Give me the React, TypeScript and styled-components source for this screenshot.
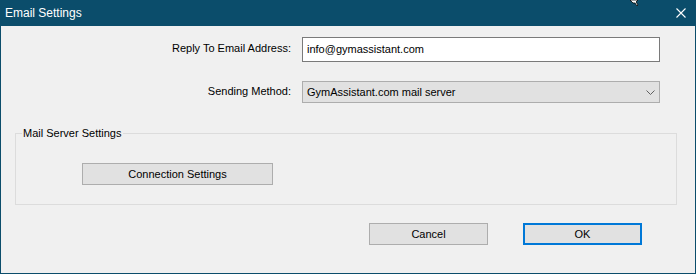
import React from "react";
import styled, { createGlobalStyle } from "styled-components";

const GlobalStyle = createGlobalStyle`
  html, body {
    margin: 0;
    padding: 0;
    background: #f0f0f0;
  }
  body {
    font-family: "Liberation Sans", Arial, sans-serif;
    font-size: 11px;
    color: #000;
  }
`;

const accent = "#0b4d6b";

const Window = styled.div`
  width: 696px;
  height: 274px;
  box-sizing: border-box;
  display: flex;
  flex-direction: column;
  background: #f0f0f0;
  border: 1px solid ${accent};
  border-top: none;
  overflow: hidden;
`;

const TitleBar = styled.div`
  height: 26px;
  flex: none;
  display: flex;
  align-items: center;
  justify-content: space-between;
  background: ${accent};
  color: #fff;
  padding: 0 9px 0 4px;
  font-size: 12px;
  position: relative;
`;

const CloseIcon = styled.svg`
  width: 10px;
  height: 10px;
  display: block;
`;

const Cursor = styled.svg`
  position: absolute;
  left: 628px;
  top: 0;
`;

const Body = styled.div`
  flex: 1;
  display: flex;
  flex-direction: column;
`;

const FormGrid = styled.div`
  display: grid;
  grid-template-columns: 290px 358px;
  column-gap: 11px;
  row-gap: 19px;
  align-items: center;
  margin-top: 11px;
`;

const Label = styled.label`
  text-align: right;
  padding-bottom: 3px;
`;

const TextField = styled.div`
  height: 25px;
  box-sizing: border-box;
  border: 1px solid #7a7a7a;
  background: #fff;
  display: flex;
  align-items: center;
  padding: 0 4px 2px;
`;

const Combo = styled.div`
  height: 22px;
  box-sizing: border-box;
  border: 1px solid #adadad;
  background: #e1e1e1;
  display: flex;
  align-items: center;
  justify-content: space-between;
  padding: 0 4px 1px;
`;

const Chevron = styled.svg`
  width: 9px;
  height: 5px;
  display: block;
  margin-top: 1px;
`;

const Group = styled.fieldset`
  margin: 23px 18px 0 14px;
  padding: 0 0 19px 0;
  border: 1px solid #dcdcdc;
  min-width: 0;
`;

const Legend = styled.legend`
  margin-left: 6px;
  padding: 0 2px 0 1px;
  line-height: 15px;
`;

const Button = styled.button<{ $default?: boolean }>`
  width: 119px;
  height: 22px;
  box-sizing: border-box;
  background: #e1e1e1;
  border: ${(p) => (p.$default ? "2px solid #0078d7" : "1px solid #adadad")};
  font-family: inherit;
  font-size: 11px;
  color: #000;
  padding: 0 0 1px;
  border-radius: 0;
`;

const WideButton = styled(Button)`
  width: 191px;
  margin: 22px 0 0 66px;
  display: block;
`;

const ButtonRow = styled.div`
  display: flex;
  justify-content: flex-end;
  gap: 35px;
  margin-top: 18px;
  padding-right: 53px;
`;

export default function App() {
  return (
    <>
      <GlobalStyle />
      <Window>
        <TitleBar>
          <span>Email Settings</span>
          <Cursor width="10" height="6" viewBox="0 0 10 6">
            <path d="M1 0 L4 3 L6 3 L8 6 L9 5 L7 2 L9 0 Z" fill="#fff" stroke="#000" strokeWidth="0.8" />
          </Cursor>
          <CloseIcon viewBox="0 0 10 10">
            <path d="M0.5 0.5 L9.5 9.5 M9.5 0.5 L0.5 9.5" stroke="#fff" strokeWidth="1.1" />
          </CloseIcon>
        </TitleBar>
        <Body>
          <FormGrid>
            <Label>Reply To Email Address:</Label>
            <TextField>info@gymassistant.com</TextField>
            <Label>Sending Method:</Label>
            <Combo>
              <span>GymAssistant.com mail server</span>
              <Chevron viewBox="0 0 9 5">
                <path d="M0.5 0.5 L4.5 4.5 L8.5 0.5" fill="none" stroke="#606060" strokeWidth="1" />
              </Chevron>
            </Combo>
          </FormGrid>
          <Group>
            <Legend>Mail Server Settings</Legend>
            <WideButton>Connection Settings</WideButton>
          </Group>
          <ButtonRow>
            <Button>Cancel</Button>
            <Button $default>OK</Button>
          </ButtonRow>
        </Body>
      </Window>
    </>
  );
}
